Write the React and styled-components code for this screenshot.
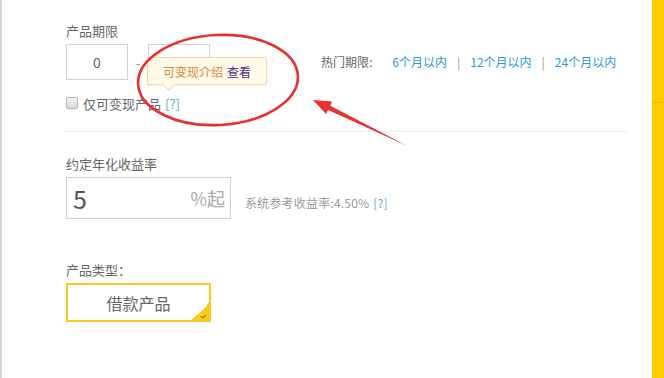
import React from "react";
import styled, { createGlobalStyle } from "styled-components";

const GlobalStyle = createGlobalStyle`
  html, body { margin: 0; padding: 0; background: #fff; overflow: hidden; }
  body { font-family: "Noto Sans CJK SC", "Noto Sans", sans-serif; }
  * { box-sizing: border-box; }
`;

const Page = styled.div`
  position: relative;
  display: grid;
  grid-template-columns: 652px 12px;
  width: 664px;
  height: 378px;
  overflow: hidden;
  background: #fff;
`;

const Frame = styled.div`
  display: flex;
  min-width: 0;
  border-left: 2px solid #d6d6d6;
  padding: 0 9px 0 3px;
`;

const Panel = styled.div`
  flex: 1;
  min-width: 0;
  border-left: 1px solid #f6f6f6;
  border-right: 1px solid #f6f6f6;
  padding: 22px 14px 0 60px;
`;

const SideBar = styled.div`
  background: linear-gradient(
    to bottom,
    #ffcc00 0,
    #ffcc00 102px,
    #ecbd00 102px,
    #ecbd00 103px,
    #ffcc00 103px
  );
`;

const Label = styled.div`
  font-size: 13px;
  line-height: 18px;
  color: #666;
  margin-top: ${(p) => p.$top || 0}px;
  margin-bottom: 4px;
`;

const TermRow = styled.div`
  position: relative;
  display: flex;
  align-items: center;
  height: 36px;
`;

const NumBox = styled.div`
  flex: 0 0 62px;
  width: 62px;
  height: 36px;
  border: 1px solid #d3d3d3;
  display: flex;
  align-items: center;
  justify-content: center;
  font-size: 14px;
  color: #666;
`;

const Dash = styled.span`
  flex: 0 0 20px;
  text-align: center;
  font-size: 13px;
  color: #888;
`;

const HotGroup = styled.div`
  display: flex;
  align-items: center;
  white-space: nowrap;
  margin-left: 111px;
  font-size: 12px;
  line-height: 18px;
`;

const HotTitle = styled.span`
  color: #666;
  margin-right: 20px;
`;

const HotLink = styled.a`
  color: #2b9ad3;
  text-decoration: none;
`;

const Sep = styled.span`
  color: #8a9aa6;
  margin: 0 10px;
`;

const Tip = styled.div`
  position: absolute;
  left: 81px;
  top: 13px;
  width: 120px;
  height: 28px;
  background: #fffaea;
  border: 1px solid #f3d7a6;
  border-radius: 2px;
  display: flex;
  align-items: center;
  padding-left: 15px;
  font-size: 12px;
  color: #d98b2b;
  white-space: nowrap;
  box-shadow: 0 1px 2px rgba(240, 200, 130, 0.25);

  &::after {
    content: "";
    position: absolute;
    left: 16px;
    bottom: -5px;
    width: 9px;
    height: 9px;
    background: #fffaea;
    border-right: 1px solid #f3d7a6;
    border-bottom: 1px solid #f3d7a6;
    transform: rotate(45deg);
  }
`;

const TipLink = styled.span`
  color: #4e2a7f;
  margin-left: 4px;
`;

const CheckRow = styled.div`
  display: flex;
  align-items: center;
  margin-top: 17px;
  height: 12px;
  font-size: 13px;
  color: #666;
`;

const CheckBox = styled.span`
  width: 12px;
  height: 12px;
  border: 1px solid #b5b5b5;
  border-radius: 2px;
  background: linear-gradient(#f0f0f0, #d9d9d9);
  margin-right: 5px;
`;

const Help = styled.span`
  color: #5fa8d3;
  margin-left: 4px;
`;

const Divider = styled.div`
  height: 1px;
  background: #eeeeee;
  margin-top: 22px;
`;

const RateRow = styled.div`
  display: flex;
  align-items: center;
`;

const RateBox = styled.div`
  width: 165px;
  height: 42px;
  border: 1px solid #d0d0d0;
  display: flex;
  align-items: center;
  justify-content: space-between;
  padding: 0 5px 0 6px;
`;

const RateValue = styled.span`
  font-size: 25px;
  color: #555;
`;

const RateUnit = styled.span`
  font-size: 18px;
  color: #aaa;
`;

const Hint = styled.span`
  margin-left: 14px;
  padding-top: 8px;
  font-size: 12px;
  letter-spacing: 0.2px;
  color: #999;
`;

const TypeBox = styled.div`
  position: relative;
  width: 145px;
  height: 39px;
  border: 2px solid #f6cd1f;
  display: flex;
  align-items: center;
  justify-content: center;
  font-size: 16px;
  color: #666;
  overflow: hidden;
`;

const Corner = styled.span`
  position: absolute;
  right: 0;
  bottom: 0;
  width: 17px;
  height: 17px;
  background: linear-gradient(135deg, transparent 50%, #f6cd1f 50%);
`;

const Overlay = styled.svg`
  position: absolute;
  left: 0;
  top: 0;
  pointer-events: none;
`;

export default function App() {
  return (
    <>
      <GlobalStyle />
      <Page>
        <Frame>
          <Panel>
            <Label>产品期限</Label>
            <TermRow>
              <NumBox>0</NumBox>
              <Dash>-</Dash>
              <NumBox />
              <HotGroup>
                <HotTitle>热门期限:</HotTitle>
                <HotLink>6个月以内</HotLink>
                <Sep>|</Sep>
                <HotLink>12个月以内</HotLink>
                <Sep>|</Sep>
                <HotLink>24个月以内</HotLink>
              </HotGroup>
              <Tip>
                可变现介绍<TipLink>查看</TipLink>
              </Tip>
            </TermRow>
            <CheckRow>
              <CheckBox />
              仅可变现产品<Help>[?]</Help>
            </CheckRow>
            <Divider />

            <Label $top={23}>约定年化收益率</Label>
            <RateRow>
              <RateBox>
                <RateValue>5</RateValue>
                <RateUnit>%起</RateUnit>
              </RateBox>
              <Hint>
                系统参考收益率:4.50%<Help>[?]</Help>
              </Hint>
            </RateRow>

            <Label $top={42}>产品类型：</Label>
            <TypeBox>
              借款产品
              <Corner>
                <svg width="17" height="17" viewBox="0 0 17 17">
                  <path d="M9 11 L11.2 13 L14 10" fill="none" stroke="#b07a10" strokeWidth="1.2" />
                </svg>
              </Corner>
            </TypeBox>
          </Panel>
        </Frame>
        <SideBar />
        <Overlay width="664" height="378" viewBox="0 0 664 378">
          <ellipse
            cx="218"
            cy="80"
            rx="80"
            ry="45"
            transform="rotate(-3 218 80)"
            fill="none"
            stroke="#e7312f"
            strokeWidth="2.6"
          />
          <polygon
            points="313,100 332,101.6 330.3,105.7 407.5,146 328.1,110.1 326,114"
            fill="#e8322f"
          />
        </Overlay>
      </Page>
    </>
  );
}
